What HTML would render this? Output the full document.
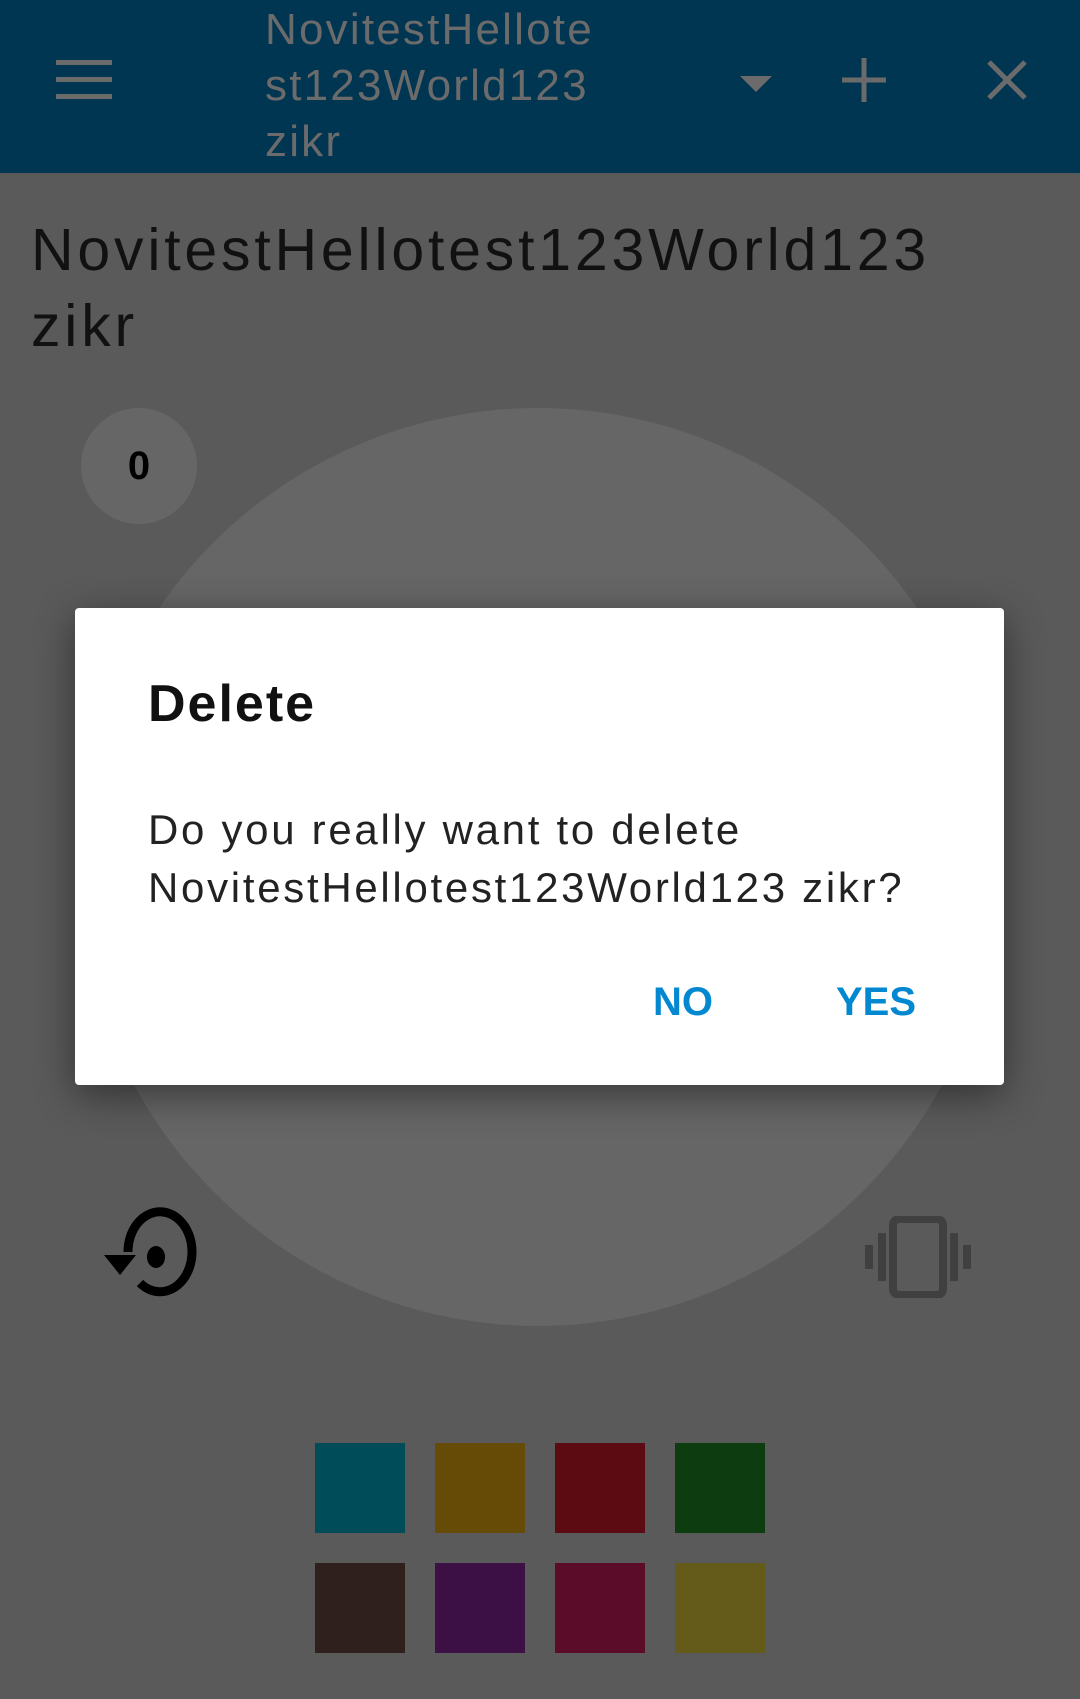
<!DOCTYPE html>
<html><head><meta charset="utf-8"><style>
*{margin:0;padding:0;box-sizing:border-box}
body{width:1080px;height:1699px;background:#5a5a5a;position:relative;overflow:hidden;font-family:"Liberation Sans",Roboto,sans-serif}
.tb{position:absolute;left:0;top:0;width:1080px;height:173px;background:#003652}
.tt{position:absolute;left:265px;top:2px;color:#6b6b6b;font-size:44px;line-height:56px;width:380px;letter-spacing:2.2px}
.h{position:absolute;left:31px;top:212px;font-size:59px;line-height:76px;color:#111;letter-spacing:3.8px;white-space:nowrap}
.cnt{position:absolute;left:81px;top:408px;width:116px;height:116px;border-radius:50%;background:#666;color:#000;font-size:40px;font-weight:bold;text-align:center;line-height:116px}
.big{position:absolute;left:79px;top:408px;width:918px;height:918px;border-radius:50%;background:#666}
.dlg{position:absolute;left:75px;top:608px;width:929px;height:477px;background:#fff;border-radius:4px;box-shadow:0 10px 40px rgba(0,0,0,.45)}
.dt{position:absolute;left:73px;top:66px;font-size:52px;font-weight:bold;color:#111;letter-spacing:2px}
.db{position:absolute;left:73px;top:193px;font-size:42px;line-height:58px;color:#222;letter-spacing:2.7px;white-space:nowrap}
.btn{position:absolute;top:372px;font-size:40px;font-weight:bold;color:#0288d1}
.sw{position:absolute;width:90px;height:90px}
</style></head><body>
<div class="tb">
<svg style="position:absolute;left:56px;top:60px" width="56" height="40"><rect y="0" width="56" height="5" fill="#6b6b6b"/><rect y="17" width="56" height="5" fill="#6b6b6b"/><rect y="34" width="56" height="5" fill="#6b6b6b"/></svg>
<div class="tt">NovitestHellote<br>st123World123<br>zikr</div>
<svg style="position:absolute;left:740px;top:76px" width="32" height="16"><path d="M0 0H32L16 16Z" fill="#6b6b6b"/></svg>
<svg style="position:absolute;left:842px;top:58px" width="44" height="44"><path d="M22 0V44M0 22H44" stroke="#6b6b6b" stroke-width="5"/></svg>
<svg style="position:absolute;left:987px;top:60px" width="40" height="40"><path d="M2 2L38 38M38 2L2 38" stroke="#6b6b6b" stroke-width="5"/></svg>
</div>
<div class="h">NovitestHellotest123World123<br>zikr</div>
<div class="big"></div>
<div class="cnt">0</div>
<svg style="position:absolute;left:100px;top:1205px" width="100" height="95" viewBox="0 0 100 95"><path d="M28 47A32 40 0 1 1 40 78" fill="none" stroke="#000" stroke-width="9"/><path d="M4 50H36L20 70Z" fill="#000"/><ellipse cx="56" cy="52" rx="9" ry="11" fill="#000"/></svg>
<svg style="position:absolute;left:865px;top:1216px" width="106" height="82" viewBox="0 0 106 82"><rect x="28" y="3" width="50" height="76" rx="6" fill="none" stroke="#404040" stroke-width="8"/><rect x="13" y="17" width="8" height="48" fill="#404040"/><rect x="0" y="29" width="8" height="24" fill="#404040"/><rect x="85" y="17" width="8" height="48" fill="#404040"/><rect x="98" y="29" width="8" height="24" fill="#404040"/></svg>
<div class="sw" style="left:315px;top:1443px;background:#004c59"></div>
<div class="sw" style="left:435px;top:1443px;background:#654b06"></div>
<div class="sw" style="left:555px;top:1443px;background:#5c0b12"></div>
<div class="sw" style="left:675px;top:1443px;background:#0d3c11"></div>
<div class="sw" style="left:315px;top:1563px;background:#2f201e"></div>
<div class="sw" style="left:435px;top:1563px;background:#3d1045"></div>
<div class="sw" style="left:555px;top:1563px;background:#5a0c28"></div>
<div class="sw" style="left:675px;top:1563px;background:#645a19"></div>
<div class="dlg">
<div class="dt">Delete</div>
<div class="db">Do you really want to delete<br>NovitestHellotest123World123 zikr?</div>
<div class="btn" style="left:578px">NO</div>
<div class="btn" style="left:761px">YES</div>
</div>
</body></html>
